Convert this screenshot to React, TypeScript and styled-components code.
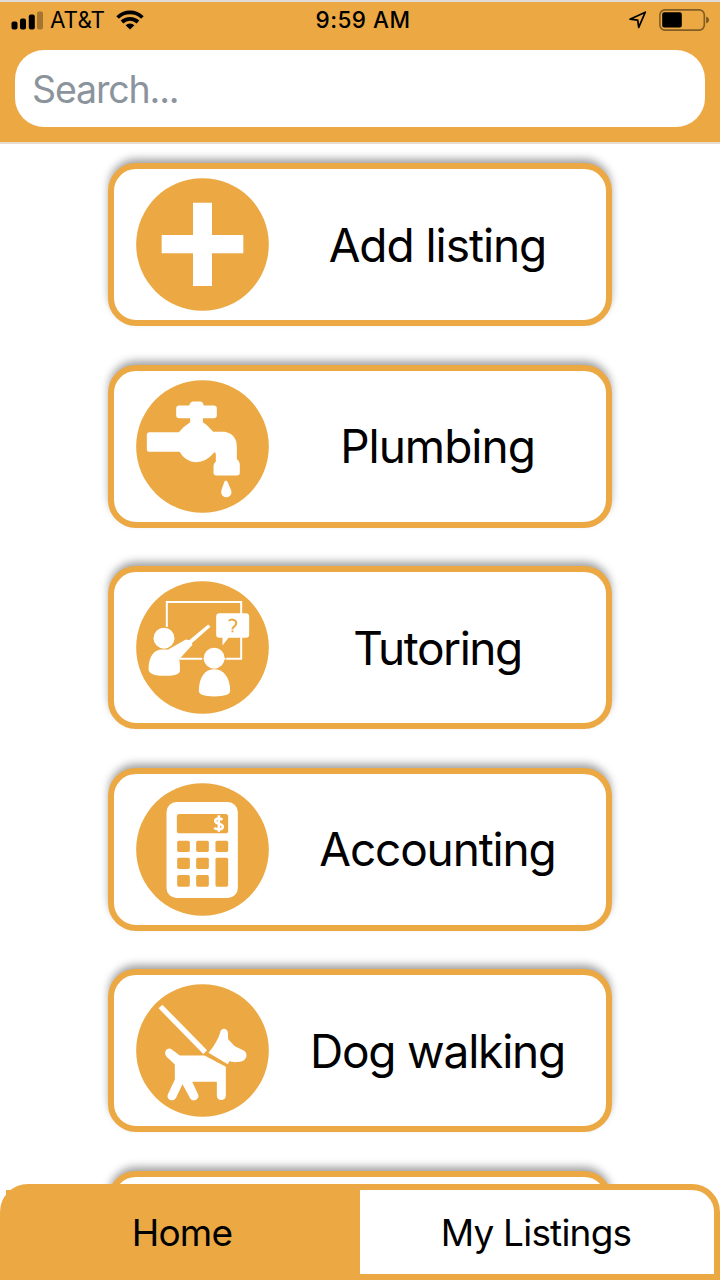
import React from 'react';
import styled, { createGlobalStyle } from 'styled-components';

const ORANGE = '#eba843';

const GlobalStyle = createGlobalStyle`
  *, *::before, *::after { box-sizing: border-box; }
  html, body { margin: 0; padding: 0; }
  body {
    background: #fff;
    color: #000;
    font-family: Inter, 'Liberation Sans', sans-serif;
    overflow: hidden;
  }
`;

const Screen = styled.div`
  display: flex;
  flex-direction: column;
  height: 1280px;
  width: 720px;
  overflow: hidden;
`;

const Header = styled.header`
  flex: none;
  height: 144px;
  background: ${ORANGE};
  border-top: 2px solid #dfdbd8;
  border-bottom: 2px solid #e6dccf;
`;

const StatusBar = styled.div`
  display: grid;
  grid-template-columns: 1fr auto 1fr;
  align-items: center;
  height: 36px;
  padding: 0 10px 0 11px;
`;

const StatusGroup = styled.div<{ $end?: boolean }>`
  display: flex;
  align-items: center;
  justify-content: ${(p) => (p.$end ? 'flex-end' : 'flex-start')};
`;

const Carrier = styled.span`
  font-size: 22.5px;
  line-height: 36px;
  letter-spacing: 0;
  margin: 0 11px 0 7px;
`;

const Clock = styled.span`
  font-size: 22.5px;
  font-weight: 500;
  line-height: 36px;
  letter-spacing: 0.5px;
  padding-left: 5px;
`;

const SearchField = styled.input`
  display: block;
  width: 690px;
  height: 76.5px;
  margin: 12px 15px 0;
  padding: 2px 17px 0;
  border: 0;
  border-radius: 29px;
  outline: 0;
  background: #fff;
  font: 400 37.5px Inter, 'Liberation Sans', sans-serif;
  letter-spacing: -1.15px;
  &::placeholder { color: #8b949c; opacity: 1; }
`;

const List = styled.main`
  flex: 1;
  min-height: 0;
  overflow: hidden;
  display: flex;
  flex-direction: column;
  align-items: center;
  gap: 38.75px;
  padding-top: 19.25px;
`;

const Card = styled.button`
  flex: none;
  display: flex;
  align-items: center;
  width: 504px;
  height: 162.75px;
  padding: 0 0 0 22px;
  border: 6px solid ${ORANGE};
  border-radius: 28px;
  background: #fff;
  color: #000;
  font-family: inherit;
  box-shadow: 0 -5px 8px -1px rgba(0, 0, 0, 0.38);
`;

const CardLabel = styled.span<{ $spacing: number }>`
  flex: 1;
  font-size: 46px;
  line-height: 56px;
  letter-spacing: ${(p) => p.$spacing}px;
  text-align: center;
  white-space: nowrap;
`;

const BadgeSvg = styled.svg`
  flex: none;
  display: block;
  width: 133px;
  height: 133px;
`;

const TabBar = styled.nav`
  flex: none;
  position: relative;
  display: flex;
  height: 96px;
  border: 6px solid ${ORANGE};
  border-radius: 28px 28px 0 0;
  background: #fff;
`;

const Tab = styled.button<{ $active?: boolean }>`
  flex: 1;
  display: flex;
  align-items: center;
  justify-content: center;
  padding: 0 2px 0 0;
  border: 0;
  background: ${(p) => (p.$active ? ORANGE : 'transparent')};
  color: #000;
  font: 400 37px Inter, 'Liberation Sans', sans-serif;
  letter-spacing: -0.8px;
`;

const Signal = () => (
  <svg width="32" height="20" viewBox="0 0 32 20">
    <rect x="0.5" y="11.5" width="6" height="8" rx="2" />
    <rect x="9" y="8.5" width="6" height="11" rx="2" />
    <rect x="17.8" y="4.5" width="6" height="15" rx="2" />
    <rect x="26" y="1.5" width="6" height="18" rx="2" opacity="0.3" />
  </svg>
);

const Wifi = () => (
  <svg width="28" height="20" viewBox="0 0 28 20">
    <g fill="none" stroke="#000" strokeWidth="3.8">
      <path d="M1.6 7.5a17.8 17.8 0 0 1 24.8 0" />
      <path d="M6 12a11.6 11.6 0 0 1 16 0" />
    </g>
    <path d="M14 19.5l-4.4-4.3a6.3 6.3 0 0 1 8.8 0z" />
  </svg>
);

const LocationArrow = () => (
  <svg width="18" height="18" viewBox="0 0 18 18">
    <path d="M1 8.2L16.3 1.2L9.7 16.4L8.7 9.2Z" fill="none" stroke="#000" strokeWidth="1.7" strokeLinejoin="round" />
  </svg>
);

const Battery = styled.svg`
  margin-left: 12px;
`;

const BatteryIcon = () => (
  <Battery width="51" height="22" viewBox="0 0 51 22">
    <rect x="0.9" y="0.9" width="44.4" height="20.2" rx="5" fill="none" stroke="#000" strokeOpacity="0.45" strokeWidth="1.6" />
    <rect x="3.2" y="3.3" width="19.6" height="15.2" rx="2" />
    <path d="M47.2 7.4q2.8 1 2.8 3.6t-2.8 3.6z" opacity="0.5" />
  </Battery>
);

const Badge = ({ children }: { children: React.ReactNode }) => (
  <BadgeSvg viewBox="0 0 399 399">
    <circle cx="199.5" cy="199.5" r="199" fill={ORANGE} />
    <g fill="#fff">{children}</g>
  </BadgeSvg>
);

const PlusBadge = () => (
  <Badge>
    <path d="M171 74h57v97h94v55h-94v98h-57v-98H77v-55h94z" />
  </Badge>
);

const FaucetBadge = () => (
  <Badge>
    <g transform="translate(-18.5 -28.5)">
      <path d="M148 105h30q4-12 12-12h21q8 0 11 12h30q9 0 9 9v20q0 9-9 9h-33v12q15 9 31 29h34q36 6 37 44v38q9 5 9 19v21q0 9-9 9h-61q-9 0-9-9v-20q0-8 7-13v-20q0-10-5-7-24 29-54 29-32 0-50-31H59q-8 0-8-8v-43q0-8 8-8h88q16-19 34-30v-12h-33q-9 0-9-9v-20q0-9 9-9z" />
      <path d="M288 330q5 0 7 8c3 10 10 19 10 27a15.500 15.500 0 0 1-31 0c0-8 5-17 8-27q2-8 6-8z" />
    </g>
  </Badge>
);

const TutorBadge = () => (
  <Badge>
    <g transform="translate(-18.500 -27.500)">
      <path d="M111 170V90.500H334V261H148" fill="none" stroke="#fff" strokeWidth="6" />
      <circle cx="102.500" cy="199" r="35" fill={ORANGE} />
      <circle cx="102.500" cy="199" r="31.500" />
      <path d="M56 292c1-39 16-59 42-59h17l53-30 10 2 57-47 7 7-56 49 2 5-40 43q3 13 2 36-2 14-47 14-45 0-47-20z" />
      <circle cx="253" cy="259" r="36" fill={ORANGE} />
      <path d="M207 357c0-43 20-65 46-65s48 22 48 65q0 17-48 17-46 0-46-17z" />
      <path d="M222 261h65" stroke="#fff" strokeWidth="5" />
      <circle cx="253" cy="259" r="31.500" />
      <path d="M269 124h79q10 0 10 10v54q0 10-10 10h-52l-18 23v-23h-9q-10 0-10-10v-54q0-10 10-10z" />
      <path d="M297 147c6-6 20-5 22 5 2 12-11 12-11 19v2M308 176v5" fill="none" stroke={ORANGE} strokeWidth="6" />
    </g>
  </Badge>
);

const CalculatorBadge = () => (
  <Badge>
    <g transform="translate(-18.500 -27)">
      <rect x="110" y="84" width="214" height="288" rx="30" />
      <g fill={ORANGE}>
        <rect x="141" y="120" width="154" height="58" rx="8" />
        <rect x="142" y="200" width="38" height="34" rx="5" />
        <rect x="199" y="200" width="38" height="34" rx="5" />
        <rect x="257" y="200" width="38" height="34" rx="5" />
        <rect x="142" y="251" width="38" height="34" rx="5" />
        <rect x="199" y="251" width="38" height="34" rx="5" />
        <rect x="142" y="303" width="38" height="35" rx="5" />
        <rect x="199" y="303" width="38" height="35" rx="5" />
        <rect x="257" y="251" width="38" height="87" rx="5" />
      </g>
      <path d="M278 137c-7-5-22-5-22 4 0 11 23 5 23 17 0 10-19 9-26 4M267 124v49" fill="none" stroke="#fff" strokeWidth="7.500" />
    </g>
  </Badge>
);

const DogBadge = () => (
  <Badge>
    <g transform="translate(-18.500 -27.500)">
      <path d="M92 95L226 232" stroke="#fff" strokeWidth="16" />
      <path d="M236 234C250 217 266 193 271 173c2-15 21-15 23 0l1 20 20 21 25 12c9 4 13 15 8 23-6 13-20 13-33 13l-17-3-4 9z" />
      <path d="M125 223l25 19h74l64 34v87c0 17-27 17-27 0v-42h-74l18 38c6 14-17 26-25 10l-22-41-19 40c-8 16-31 7-25-9l21-45v-45l-23-22c-15-14 1-33 13-24z" />
    </g>
  </Badge>
);

const services = [
  { label: 'Add listing', spacing: -1.05, Icon: PlusBadge },
  { label: 'Plumbing', spacing: -1, Icon: FaucetBadge },
  { label: 'Tutoring', spacing: -1.45, Icon: TutorBadge },
  { label: 'Accounting', spacing: -1.15, Icon: CalculatorBadge },
  { label: 'Dog walking', spacing: -1.2, Icon: DogBadge },
];

export default function App() {
  return (
    <Screen>
      <GlobalStyle />
      <Header>
        <StatusBar>
          <StatusGroup>
            <Signal />
            <Carrier>AT&amp;T</Carrier>
            <Wifi />
          </StatusGroup>
          <Clock>9:59 AM</Clock>
          <StatusGroup $end>
            <LocationArrow />
            <BatteryIcon />
          </StatusGroup>
        </StatusBar>
        <SearchField placeholder="Search..." />
      </Header>
      <List>
        {services.map(({ label, spacing, Icon }) => (
          <Card key={label}>
            <Icon />
            <CardLabel $spacing={spacing}>{label}</CardLabel>
          </Card>
        ))}
        <Card aria-hidden="true" />
      </List>
      <TabBar>
        <Tab $active>Home</Tab>
        <Tab>My Listings</Tab>
      </TabBar>
    </Screen>
  );
}
